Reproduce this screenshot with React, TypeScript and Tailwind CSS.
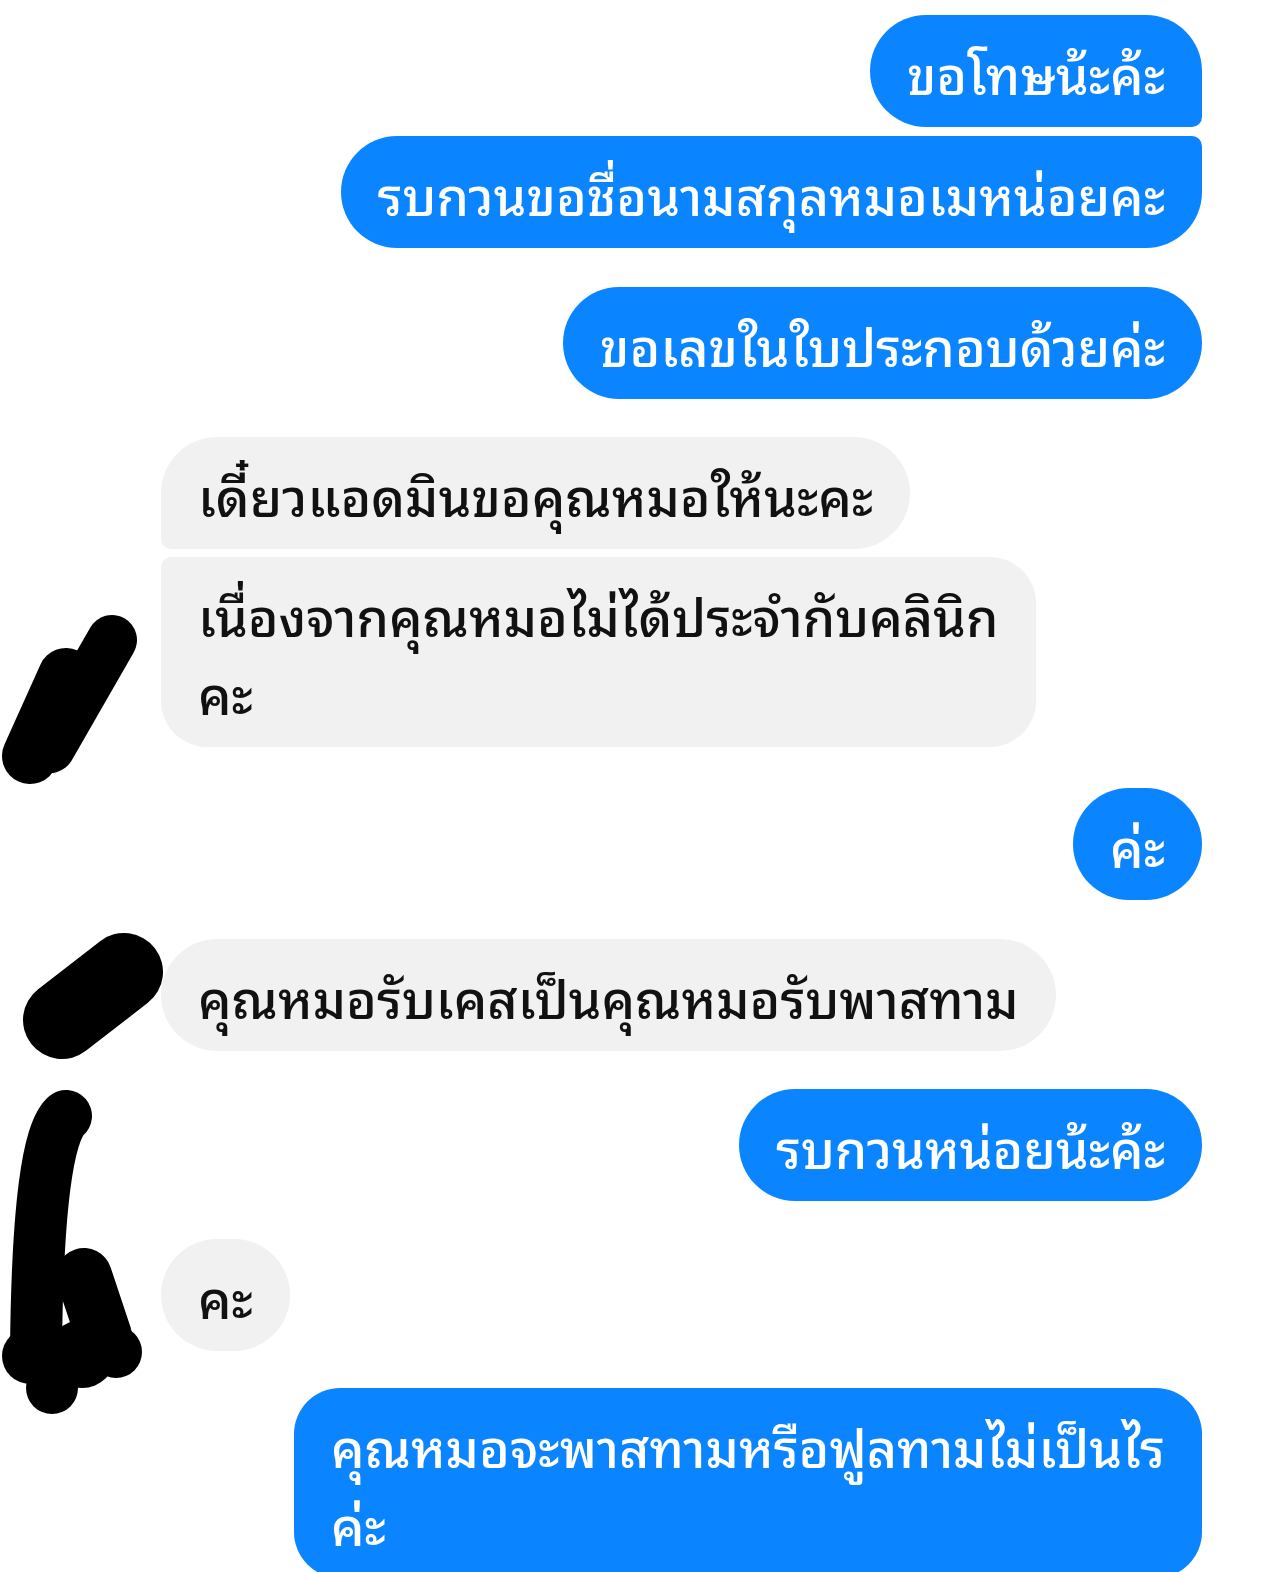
import React from 'react';

type Side = 'me' | 'them';

interface IMessage {
  side: Side;
  text: string;
  corner: string;
  gap: string;
}

const messages: IMessage[] = [
  { side: 'me', text: 'ขอโทษน้ะค้ะ', corner: 'rounded-[56px] rounded-br-[10px]', gap: 'mt-[15px]' },
  { side: 'me', text: 'รบกวนขอชื่อนามสกุลหมอเมหน่อยคะ', corner: 'rounded-[56px] rounded-tr-[10px]', gap: 'mt-[9px]' },
  { side: 'me', text: 'ขอเลขในใบประกอบด้วยค่ะ', corner: 'rounded-[56px]', gap: 'mt-[39px]' },
  { side: 'them', text: 'เดี๋ยวแอดมินขอคุณหมอให้นะคะ', corner: 'rounded-[56px] rounded-bl-[10px]', gap: 'mt-[38px]' },
  { side: 'them', text: 'เนื่องจากคุณหมอไม่ได้ประจำกับคลินิก\nคะ', corner: 'rounded-[46px] rounded-tl-[10px]', gap: 'mt-[8px]' },
  { side: 'me', text: 'ค่ะ', corner: 'rounded-[56px]', gap: 'mt-[41px]' },
  { side: 'them', text: 'คุณหมอรับเคสเป็นคุณหมอรับพาสทาม', corner: 'rounded-[56px]', gap: 'mt-[39px]' },
  { side: 'me', text: 'รบกวนหน่อยน้ะค้ะ', corner: 'rounded-[56px]', gap: 'mt-[38px]' },
  { side: 'them', text: 'คะ', corner: 'rounded-[56px]', gap: 'mt-[38px]' },
  { side: 'me', text: 'คุณหมอจะพาสทามหรือฟูลทามไม่เป็นไร\nค่ะ', corner: 'rounded-[46px]', gap: 'mt-[37px]' },
];

function Bubble({ m }: { m: IMessage }) {
  const isMe = m.side === 'me';
  return (
    <div className={`flex ${isMe ? 'justify-end pr-[78px]' : 'justify-start pl-[161px]'} ${m.gap}`}>
      <div
        className={`${m.corner} ${
          isMe ? 'bg-[#0a84ff] text-white' : 'bg-[#f1f1f1] text-[#111]'
        } whitespace-pre-line px-[37px] pt-[18px] pb-[16px] text-[52px] font-medium leading-[78px]`}
      >
        {m.text}
      </div>
    </div>
  );
}

export default function App() {
  return (
    <div
      className="relative h-[1572px] w-[1280px] overflow-hidden bg-white"
      style={{ fontFamily: '"Noto Sans Thai Looped", "Noto Serif Thai", "Noto Sans Thai", "Noto Sans", "DejaVu Sans", sans-serif' }}
    >
      {messages.map((m, i) => (
        <Bubble key={i} m={m} />
      ))}

      {/* scribbled-out avatars */}
      <svg className="absolute left-0 top-0" width="200" height="1572" viewBox="0 0 200 1572">
        <g stroke="#000" strokeLinecap="round" strokeLinejoin="round" fill="none">
          <path d="M30 756 L66 676" strokeWidth="56" />
          <path d="M50 748 L112 640" strokeWidth="50" />
          <path d="M62 1020 L124 972" strokeWidth="78" />
          <path d="M66 1116 Q38 1140 36 1350" strokeWidth="52" />
          <path d="M84 1276 L104 1336" strokeWidth="56" />
        </g>
        <g fill="#000">
          <circle cx="30" cy="1356" r="28" />
          <circle cx="52" cy="1388" r="26" />
          <circle cx="116" cy="1352" r="26" />
          <circle cx="82" cy="1354" r="34" />
        </g>
      </svg>
    </div>
  );
}
